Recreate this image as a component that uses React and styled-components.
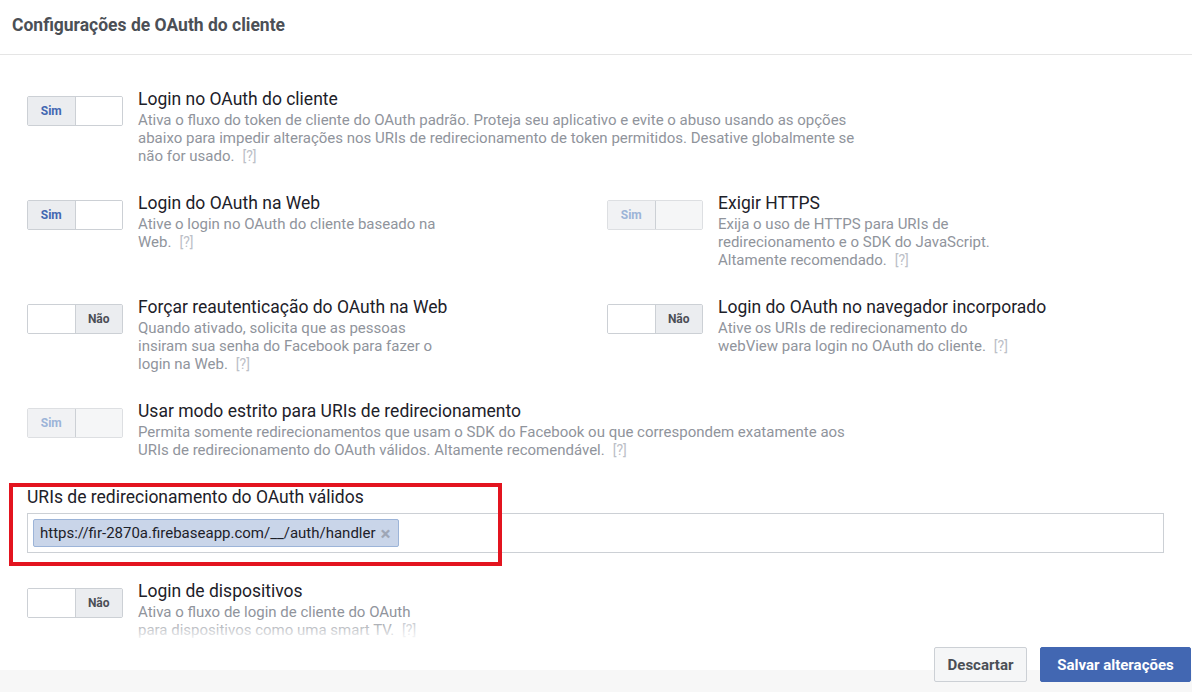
import React from "react";
import styled, { createGlobalStyle } from "styled-components";

const GlobalStyle = createGlobalStyle`
  html, body {
    margin: 0;
    padding: 0;
    background: #fff;
    font-family: Roboto, "Liberation Sans", Arial, sans-serif;
    overflow: hidden;
  }
`;

const settings = [
  {
    on: true,
    title: "Login no OAuth do cliente",
    text: "Ativa o fluxo do token de cliente do OAuth padrão. Proteja seu aplicativo e evite o abuso usando as opções abaixo para impedir alterações nos URIs de redirecionamento de token permitidos. Desative globalmente se não for usado.",
    wide: true,
  },
  {
    on: true,
    title: "Login do OAuth na Web",
    text: "Ative o login no OAuth do cliente baseado na Web.",
  },
  {
    on: true,
    disabled: true,
    title: "Exigir HTTPS",
    text: "Exija o uso de HTTPS para URIs de redirecionamento e o SDK do JavaScript. Altamente recomendado.",
  },
  {
    on: false,
    title: "Forçar reautenticação do OAuth na Web",
    text: "Quando ativado, solicita que as pessoas insiram sua senha do Facebook para fazer o login na Web.",
  },
  {
    on: false,
    title: "Login do OAuth no navegador incorporado",
    text: "Ative os URIs de redirecionamento do webView para login no OAuth do cliente.",
  },
  {
    on: true,
    disabled: true,
    title: "Usar modo estrito para URIs de redirecionamento",
    text: "Permita somente redirecionamentos que usam o SDK do Facebook ou que correspondem exatamente aos URIs de redirecionamento do OAuth válidos. Altamente recomendável.",
    wide: true,
  },
];

const Page = styled.div`
  display: flex;
  flex-direction: column;
  height: 100vh;
`;

const Header = styled.div`
  flex: none;
  height: 55px;
  box-sizing: border-box;
  border-bottom: 1px solid #e5e5e5;
  padding: 14px 12px 0;
  font-size: 17.5px;
  line-height: 22px;
  font-weight: 700;
  color: #4b4f56;
`;

const Content = styled.div`
  flex: 1;
  overflow: hidden;
  padding: 34px 28px 0 27px;
`;

const Grid = styled.div`
  display: grid;
  grid-template-columns: 580px 1fr;
  row-gap: 28px;
`;

const Item = styled.div`
  display: flex;
  align-items: flex-start;
  gap: 15px;
  grid-column: ${(p) => (p.$wide ? "1 / -1" : "auto")};
`;

const Toggle = styled.div`
  flex: none;
  display: flex;
  width: 96px;
  height: 30px;
  margin-top: 7px;
  box-sizing: border-box;
  border: 1px solid ${(p) => (p.$disabled ? "#dddfe2" : "#ccd0d5")};
  border-radius: 2px;
  overflow: hidden;
  background: #fff;
`;

const Half = styled.div`
  flex: 1;
  display: flex;
  align-items: center;
  justify-content: center;
  font-size: 12px;
  font-weight: 700;
  background: ${(p) => (p.$active ? (p.$disabled ? "#f1f2f4" : "#ebedf0") : p.$disabled ? "#f5f6f7" : "#fff")};
  color: ${(p) => (p.$yes ? (p.$disabled ? "#9cb4d8" : "#4267b2") : "#4b4f56")};
  & + & {
    border-left: 1px solid ${(p) => (p.$disabled ? "#dddfe2" : "#ccd0d5")};
  }
`;

const Text = styled.div`
  width: ${(p) => (p.$wide ? "720px" : "300px")};
`;

const Title = styled.div`
  font-size: 17.5px;
  line-height: 20px;
  color: #1d2129;
  margin-bottom: 2px;
  white-space: nowrap;
`;

const Desc = styled.div`
  font-size: 15px;
  line-height: 18px;
  color: #90949c;
`;

const Help = styled.span`
  font-size: 14px;
  line-height: 1;
  color: #bcc0c7;
  margin-left: 8px;
`;

const UriSection = styled.div`
  grid-column: 1 / -1;
  position: relative;
`;

const UriLabel = styled.div`
  font-size: 17.5px;
  line-height: 20px;
  color: #1d2129;
  margin-bottom: 6px;
`;

const TokenInput = styled.div`
  height: 40px;
  box-sizing: border-box;
  border: 1px solid #ccd0d5;
  padding: 5px;
  display: flex;
  align-items: center;
`;

const Token = styled.span`
  display: inline-flex;
  align-items: center;
  height: 28px;
  box-sizing: border-box;
  padding: 0 7px 0 6px;
  border: 1px solid #9cb4d8;
  border-radius: 2px;
  background: #c9d5e9;
  font-size: 15px;
  color: #1d2129;
`;

const Remove = styled.span`
  margin-left: 5px;
  color: #9ea6b6;
  font-size: 19px;
  font-weight: 700;
  line-height: 1;
`;

const Highlight = styled.div`
  position: absolute;
  left: -18px;
  top: -4px;
  width: 493px;
  height: 83px;
  box-sizing: border-box;
  border: 4px solid #e3141f;
  pointer-events: none;
`;

const Footer = styled.div`
  flex: none;
  position: relative;
  height: 52px;
  box-sizing: border-box;
  padding: 7px 1px 0 0;
  display: flex;
  justify-content: flex-end;
  align-items: flex-start;
  gap: 13px;
  background: linear-gradient(#fff 0 30px, #f7f7f7 30px);
  &::before {
    content: "";
    position: absolute;
    left: 0;
    right: 0;
    top: -22px;
    height: 22px;
    background: linear-gradient(rgba(255, 255, 255, 0), rgba(255, 255, 255, 0.95));
  }
`;

const Button = styled.button`
  height: 35px;
  padding: 0;
  font-family: inherit;
  font-size: 15px;
  font-weight: 700;
  border-radius: 2px;
  border: 1px solid ${(p) => (p.$primary ? "#4267b2" : "#ccd0d5")};
  background: ${(p) => (p.$primary ? "#4267b2" : "#f5f6f7")};
  color: ${(p) => (p.$primary ? "#fff" : "#4b4f56")};
  width: ${(p) => (p.$primary ? "151px" : "93px")};
`;

const Setting = ({ on, disabled, title, text, wide }) => (
  <Item $wide={wide}>
    <Toggle $disabled={disabled}>
      {on ? (
        <>
          <Half $active $yes $disabled={disabled}>Sim</Half>
          <Half $disabled={disabled} />
        </>
      ) : (
        <>
          <Half />
          <Half $active>Não</Half>
        </>
      )}
    </Toggle>
    <Text $wide={wide}>
      <Title>{title}</Title>
      <Desc>
        {text}
        <Help>[?]</Help>
      </Desc>
    </Text>
  </Item>
);

export default function App() {
  return (
    <Page>
      <GlobalStyle />
      <Header>Configurações de OAuth do cliente</Header>
      <Content>
        <Grid>
          {settings.map((s) => (
            <Setting key={s.title} {...s} />
          ))}
          <UriSection>
            <UriLabel>URIs de redirecionamento do OAuth válidos</UriLabel>
            <TokenInput>
              <Token>
                https://fir-2870a.firebaseapp.com/__/auth/handler
                <Remove>×</Remove>
              </Token>
            </TokenInput>
            <Highlight />
          </UriSection>
          <Setting
            on={false}
            title="Login de dispositivos"
            text="Ativa o fluxo de login de cliente do OAuth para dispositivos como uma smart TV."
          />
        </Grid>
      </Content>
      <Footer>
        <Button>Descartar</Button>
        <Button $primary>Salvar alterações</Button>
      </Footer>
    </Page>
  );
}
